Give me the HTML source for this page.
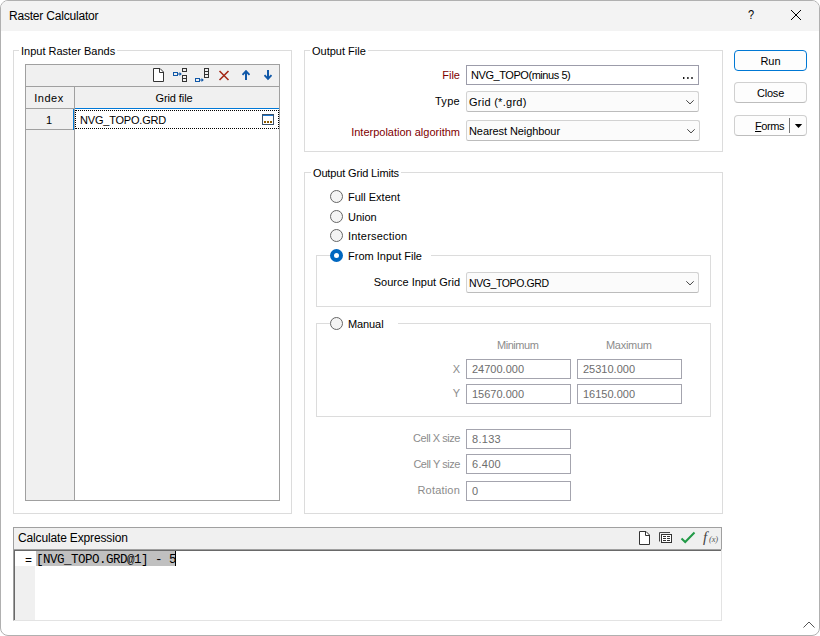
<!DOCTYPE html>
<html>
<head>
<meta charset="utf-8">
<title>Raster Calculator</title>
<style>
*{box-sizing:border-box;margin:0;padding:0}
html,body{width:820px;height:636px;background:#fff;overflow:hidden}
body{font-family:"Liberation Sans",sans-serif;font-size:11px;color:#000;position:relative}
.abs{position:absolute}
#win{position:absolute;left:0;top:0;width:820px;height:636px;border:1px solid #b0b0b0;border-radius:8px;background:#fff;overflow:hidden}
#title{position:absolute;left:0;top:0;width:820px;height:31px;background:#f3f3f3}
#title .t{position:absolute;left:9px;top:9px;font-size:12px;line-height:14px;white-space:nowrap;letter-spacing:-0.2px}
.grp{position:absolute;border:1px solid #dcdcdc}
.lg{position:absolute;background:#fff;white-space:nowrap;line-height:13px;padding:0 2px}
.lbl{position:absolute;white-space:nowrap;line-height:13px;text-align:right}
.red{color:#800000}
.gry{color:#8c8c8c}
.inp{position:absolute;border:1px solid #9c9caa;background:#fff;height:20px;line-height:18px;padding-left:5px;white-space:nowrap}
.inp.dis{border-color:#a4a4ae;color:#6d6d6d}
.dd{position:absolute;border:1px solid #d2d2d2;border-bottom-color:#bcbcbc;border-radius:2.5px;background:#fbfbfb;height:21px;line-height:19px;padding:1px 0 0 2px;white-space:nowrap}
.dd svg{position:absolute;right:3px;top:7px}
.mono{font-family:'Liberation Mono',monospace;font-size:11.67px;line-height:14px;white-space:pre}
.radio{position:absolute;width:13px;height:13px;border:1px solid #666;border-radius:50%;background:#f4f4f4}
.radio.on{border:4px solid #0067c0;background:#fff}
.btn{position:absolute;width:73px;height:21px;border:1px solid #d0d0d0;border-bottom-color:#bdbdbd;border-radius:4px;background:#fdfdfd;text-align:center;line-height:19px;font-size:11px;padding-top:1px}
.btn.def{border:1px solid #0078d4}
.tb{background:#f0f0f0}
</style>
</head>
<body>
<div id="win"><div id="in" style="position:absolute;left:-1px;top:-1px;width:820px;height:636px">
  <div id="title"><div class="t">Raster Calculator</div>
    <div class="abs" style="left:748px;top:7px;font-size:13px;line-height:16px;transform:scaleX(0.85);transform-origin:0 0">?</div>
    <svg class="abs" style="left:790px;top:9px" width="12" height="12" viewBox="0 0 12 12"><path d="M1 1L11 11M11 1L1 11" stroke="#000" stroke-width="1" fill="none"/></svg>
  </div>

  <!-- Input Raster Bands group -->
  <div class="grp" style="left:13px;top:50px;width:279px;height:464px"></div>
  <div class="lg" style="left:19px;top:45px">Input Raster Bands</div>
  <!-- table -->
  <div class="abs" style="left:25px;top:64px;width:255px;height:437px;border:1px solid #a0a0a0;background:#fff"></div>
  <div class="abs tb" style="left:26px;top:65px;width:253px;height:21px"></div>
  <div class="abs" style="left:26px;top:86px;width:253px;height:1px;background:#a0a0a0"></div>
  <div class="abs tb" style="left:26px;top:87px;width:253px;height:21px"></div>
  <div class="abs tb" style="left:26px;top:108px;width:48px;height:392px"></div>
  <div class="abs" style="left:74px;top:87px;width:1px;height:413px;background:#a0a0a0"></div>
  <div class="abs" style="left:26px;top:108px;width:48px;height:1px;background:#a0a0a0"></div>
  <div class="abs" style="left:26px;top:129px;width:48px;height:1px;background:#a0a0a0"></div>
  <div class="abs" style="left:75px;top:108px;width:204px;height:1px;background:#0078d7"></div>
  <div class="abs" style="left:73px;top:109px;width:1px;height:21px;background:#0078d7"></div>
  <div class="abs" style="left:75px;top:110px;width:204px;height:19px;border:1px dotted #000"></div>
  <div class="lbl" style="left:25px;top:92px;width:48px;text-align:center;letter-spacing:0.5px">Index</div>
  <div class="lbl" style="left:72px;top:92px;width:204px;text-align:center;letter-spacing:-0.1px">Grid file</div>
  <div class="lbl" style="left:25px;top:114px;width:48px;text-align:center">1</div>
  <div class="lbl" style="left:80px;top:114px;letter-spacing:-0.2px">NVG_TOPO.GRD</div>
  <!-- toolbar icons -->
  <svg class="abs" style="left:150px;top:66px" width="126" height="18" viewBox="150 66 126 18" fill="none">
    <path d="M153.5 68.5H160L163.5 72V81.5H153.5Z" fill="#fff" stroke="#333"/><path d="M159.5 68.5V72.5H163.5" stroke="#333"/>
    <rect x="173.5" y="72.5" width="4" height="3" stroke="#1058a8"/><path d="M178 74H181" stroke="#1058a8"/><path d="M179.5 72L181.8 74L179.5 76Z" fill="#1058a8"/>
    <rect x="182.5" y="68.5" width="4" height="3" stroke="#333"/><rect x="182.5" y="75.5" width="4" height="6" stroke="#333"/><path d="M182.5 78.5H186.5" stroke="#333"/>
    <rect x="195.5" y="78.5" width="4" height="3" stroke="#1058a8"/><path d="M200 80H203" stroke="#1058a8"/><path d="M201.5 78L203.8 80L201.5 82Z" fill="#1058a8"/>
    <rect x="204.5" y="68.5" width="4" height="9" stroke="#333"/><path d="M204.5 71.5H208.5M204.5 74.5H208.5" stroke="#333"/>
    <path d="M219.5 71L228.5 80M228.5 71L219.5 80" stroke="#a52a18" stroke-width="1.6"/>
    <path d="M246 80V71.5" stroke="#1058a8" stroke-width="2"/><path d="M242.5 74.8L246 71.2L249.5 74.8" stroke="#1058a8" stroke-width="1.9"/>
    <path d="M268 70V78.5" stroke="#1058a8" stroke-width="2"/><path d="M264.5 75.2L268 78.8L271.5 75.2" stroke="#1058a8" stroke-width="1.9"/>
  </svg>
  <!-- browse icon -->
  <svg class="abs" style="left:262px;top:114px" width="12" height="11" viewBox="0 0 12 11"><rect x="0.5" y="0.5" width="11" height="10" fill="#fff" stroke="#3a5068"/><rect x="1" y="1" width="10" height="1" fill="#1e78d0"/><rect x="2" y="7" width="2" height="2" fill="#8b5a00"/><rect x="5" y="7" width="2" height="2" fill="#8b5a00"/><rect x="8" y="7" width="2" height="2" fill="#8b5a00"/></svg>

  <!-- Output File group -->
  <div class="grp" style="left:304px;top:50px;width:419px;height:102px"></div>
  <div class="lg" style="left:310px;top:45px">Output File</div>
  <div class="lbl red" style="left:360px;top:69px;width:100px">File</div>
  <div class="inp" style="left:466px;top:65px;width:233px;padding-left:4px"><span style="letter-spacing:-0.44px">NVG_TOPO(minus 5)</span></div>
  <svg class="abs" style="left:682px;top:76px" width="12" height="4" viewBox="0 0 12 4"><path d="M1 1H2.4V3H1ZM5.2 1H6.6V3H5.2ZM9.3 1H10.7V3H9.3Z" fill="#111"/></svg>
  <div class="lbl" style="left:360px;top:95px;width:100px;letter-spacing:0.3px">Type</div>
  <div class="dd" style="left:466px;top:91px;width:233px"><span style="letter-spacing:0.27px">Grid (*.grd)</span><svg width="10" height="6" viewBox="0 0 10 6"><path d="M1.3 1.3L5 4.9L8.7 1.3" stroke="#444" stroke-width="1" fill="none"/></svg></div>
  <div class="lbl red" style="left:340px;top:126px;width:120px">Interpolation algorithm</div>
  <div class="dd" style="left:466px;top:120px;width:234px"><span style="letter-spacing:-0.08px">Nearest Neighbour</span><svg width="10" height="6" viewBox="0 0 10 6"><path d="M1.3 1.3L5 4.9L8.7 1.3" stroke="#444" stroke-width="1" fill="none"/></svg></div>

  <!-- Output Grid Limits -->
  <div class="grp" style="left:304px;top:172px;width:419px;height:342px"></div>
  <div class="lg" style="left:311px;top:167px;letter-spacing:-0.15px">Output Grid Limits</div>
  <div class="radio" style="left:330px;top:190px"></div>
  <div class="lbl" style="left:348px;top:191px">Full Extent</div>
  <div class="radio" style="left:330px;top:210px"></div>
  <div class="lbl" style="left:348px;top:211px">Union</div>
  <div class="radio" style="left:330px;top:229px"></div>
  <div class="lbl" style="left:348px;top:230px;letter-spacing:0.2px">Intersection</div>

  <div class="grp" style="left:316px;top:255px;width:395px;height:52px"></div>
  <div class="lg" style="left:330px;top:249px;width:101px;height:14px"></div>
  <div class="radio on" style="left:330px;top:249px"></div>
  <div class="lbl" style="left:348px;top:250px">From Input File</div>
  <div class="lbl" style="left:341px;top:276px;width:119px">Source Input Grid</div>
  <div class="dd" style="left:466px;top:272px;width:233px"><span style="font-size:10.5px;letter-spacing:-0.4px">NVG_TOPO.GRD</span><svg width="10" height="6" viewBox="0 0 10 6"><path d="M1.3 1.3L5 4.9L8.7 1.3" stroke="#444" stroke-width="1" fill="none"/></svg></div>

  <div class="grp" style="left:316px;top:323px;width:395px;height:94px"></div>
  <div class="lg" style="left:330px;top:317px;width:68px;height:14px"></div>
  <div class="radio" style="left:330px;top:317px"></div>
  <div class="lbl" style="left:348px;top:318px;letter-spacing:-0.1px">Manual</div>
  <div class="lbl gry" style="left:497px;top:339px;letter-spacing:-0.45px">Minimum</div>
  <div class="lbl gry" style="left:606px;top:339px;letter-spacing:-0.3px">Maximum</div>
  <div class="lbl gry" style="left:440px;top:363px;width:20px">X</div>
  <div class="lbl gry" style="left:440px;top:387px;width:20px">Y</div>
  <div class="inp dis" style="left:466px;top:359px;width:105px">24700.000</div>
  <div class="inp dis" style="left:577px;top:359px;width:105px">25310.000</div>
  <div class="inp dis" style="left:466px;top:384px;width:105px">15670.000</div>
  <div class="inp dis" style="left:577px;top:384px;width:105px">16150.000</div>

  <div class="lbl gry" style="left:380px;top:432px;width:80px;letter-spacing:-0.45px">Cell X size</div>
  <div class="inp dis" style="left:466px;top:429px;width:105px"><span style="letter-spacing:0.3px">8.133</span></div>
  <div class="lbl gry" style="left:380px;top:458px;width:80px;letter-spacing:-0.45px">Cell Y size</div>
  <div class="inp dis" style="left:466px;top:454px;width:105px"><span style="letter-spacing:0.3px">6.400</span></div>
  <div class="lbl gry" style="left:380px;top:484px;width:80px;letter-spacing:0.2px">Rotation</div>
  <div class="inp dis" style="left:466px;top:481px;width:105px">0</div>

  <!-- Buttons -->
  <div class="btn def" style="left:734px;top:50px">Run</div>
  <div class="btn" style="left:734px;top:82px;letter-spacing:-0.2px">Close</div>
  <div class="btn" style="left:734px;top:115px;text-align:left;padding-left:20px;letter-spacing:-0.45px"><u>F</u>orms</div>
  <div class="abs" style="left:789px;top:118px;width:1px;height:15px;background:#777"></div>
  <svg class="abs" style="left:794px;top:124px" width="9" height="5" viewBox="0 0 9 5"><path d="M0.8 0H8.2L4.5 3.9Z" fill="#000"/></svg>

  <!-- Calculate Expression -->
  <div class="abs" style="left:13px;top:527px;width:709px;height:23px;border:1px solid #a0a0a0;background:#f0f0f0"></div>
  <div class="abs" style="left:18px;top:531px;font-size:12px;line-height:14px;letter-spacing:-0.15px;white-space:nowrap">Calculate Expression</div>
  <div class="abs" style="left:13px;top:549px;width:709px;height:72px;border:1px solid #e3e3e3;border-top-color:#a0a0a0;border-left-color:#a0a0a0;background:#fff"></div>
  <div class="abs" style="left:14px;top:550px;width:707px;height:1px;background:#696969"></div>
  <div class="abs" style="left:14px;top:550px;width:1px;height:70px;background:#696969"></div>
  <div class="abs" style="left:15px;top:566px;width:20px;height:54px;background:#f0f0f0"></div>
  <div class="abs" style="left:36px;top:551px;width:139px;height:15px;background:#c0c0c0"></div>
  <div class="abs mono" style="left:25px;top:554px">=</div>
  <div class="abs mono" style="left:36px;top:553px;font-size:12.5px;letter-spacing:-0.5px">[NVG_TOPO.GRD@1] - 5</div>
  <div class="abs" style="left:175px;top:551px;width:1px;height:15px;background:#000"></div>
  <!-- calc toolbar icons -->
  <svg class="abs" style="left:636px;top:529px" width="85" height="19" viewBox="636 529 85 19" fill="none">
    <path d="M639.5 531.5H646L649.5 535V544.5H639.5Z" fill="#fff" stroke="#333"/><path d="M645.5 531.5V535.5H649.5" stroke="#333"/>
    <path d="M659.5 541.5V532.5H670" stroke="#444"/>
    <rect x="661.5" y="534.5" width="10" height="8" fill="#fff" stroke="#333"/>
    <path d="M663 536.5H666M667 536.5H670M663 538.5H666M667 538.5H670M663 540.5H666M667 540.5H670" stroke="#333"/>
    <path d="M681.5 538.5L685.2 542L694.5 532.5" stroke="#229a47" stroke-width="2"/>
  </svg>
  <div class="abs" style="left:703px;top:529px;font-family:'Liberation Serif',serif;font-style:italic;font-size:15px;line-height:16px;color:#444">f</div>
  <div class="abs" style="left:709px;top:534px;font-family:'Liberation Serif',serif;font-style:italic;font-size:8.5px;line-height:10px;color:#555;letter-spacing:-0.2px">(x)</div>

  <svg class="abs" style="left:802px;top:620px" width="14" height="10" viewBox="0 0 14 10"><path d="M1.5 7.5L7 2L12.5 7.5" stroke="#555" stroke-width="1" fill="none"/></svg>
</div></div>
</body>
</html>
